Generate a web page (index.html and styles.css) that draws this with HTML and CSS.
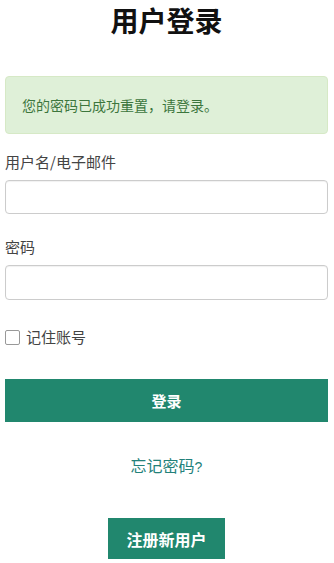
FILE: index.html
```html
<!DOCTYPE html>
<html lang="zh-CN">
<head>
<meta charset="utf-8">
<title>用户登录</title>
<link rel="stylesheet" href="styles.css">
</head>
<body>
<main class="page">
  <h1 class="title">用户登录</h1>
  <div class="alert">您的密码已成功重置，请登录。</div>
  <form class="form">
    <label class="field-label" for="user">用户名/电子邮件</label>
    <input class="input" id="user" type="text">
    <label class="field-label second" for="pw">密码</label>
    <input class="input tall" id="pw" type="password">
    <label class="remember"><span class="box"></span><span>记住账号</span></label>
    <button class="btn-login" type="button">登录</button>
  </form>
  <div class="forgot"><a class="link" href="#">忘记密码<span class="q">?</span></a></div>
  <div class="register"><button class="btn-register" type="button">注册新用户</button></div>
</main>
</body>
</html>
```
FILE: styles.css
```css
html, body {
  margin: 0;
  padding: 0;
  background: #fff;
}
body {
  font-family: "Noto Sans CJK SC", "Noto Sans", sans-serif;
  color: #333;
}
.page {
  width: 323px;
  margin: 0 6px 0 5px;
}
.title {
  margin: 0;
  font-size: 28px;
  line-height: 40px;
  font-weight: 700;
  text-align: center;
  color: #111;
}
.alert {
  margin-top: 36px;
  background: #dff0d8;
  border: 1px solid #d6e9c6;
  border-radius: 4px;
  color: #3c763d;
  font-size: 14px;
  line-height: 20px;
  padding: 18px 16px;
}
.form {
  display: flex;
  flex-direction: column;
}
.field-label {
  margin-top: 18px;
  margin-bottom: 8px;
  font-size: 15px;
  line-height: 20px;
  color: #444;
}
.field-label.second {
  margin-top: 23px;
}
.input {
  box-sizing: border-box;
  height: 34px;
  border: 1px solid #ccc;
  border-radius: 4px;
  margin: 0;
  box-shadow: inset 0 1px 1px rgba(0,0,0,0.06);
}
.input.tall {
  height: 35px;
}
.remember {
  margin-top: 29px;
  display: flex;
  align-items: center;
  gap: 6px;
  font-size: 15px;
  line-height: 16px;
  color: #444;
}
.box {
  box-sizing: border-box;
  width: 15px;
  height: 15px;
  border: 1px solid #999;
  border-radius: 2px;
  background: #fff;
}
.btn-login {
  margin-top: 34px;
  height: 43px;
  border: none;
  background: #21876e;
  color: #fff;
  font-family: inherit;
  font-size: 15px;
  font-weight: 700;
}
.forgot {
  margin-top: 32px;
  text-align: center;
  font-size: 16px;
  line-height: 22px;
}
.link {
  color: #23817a;
  text-decoration: none;
}
.q {
  font-family: "Liberation Sans", sans-serif;
  font-size: 14px;
}
.register {
  margin-top: 40px;
  text-align: center;
}
.btn-register {
  height: 41px;
  width: 117px;
  border: none;
  background: #21876e;
  color: #fff;
  font-family: inherit;
  font-size: 16px;
  font-weight: 700;
  padding: 0;
}
```
